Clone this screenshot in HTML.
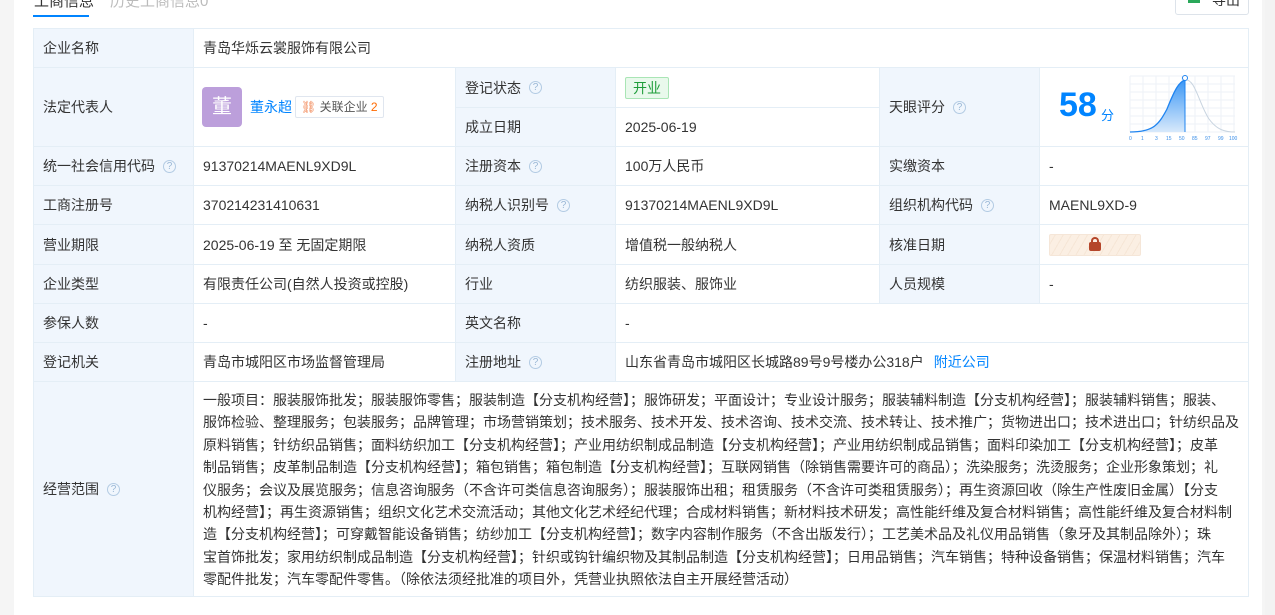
<!DOCTYPE html>
<html><head><meta charset="utf-8"><style>
*{margin:0;padding:0;box-sizing:border-box}
body{width:1275px;height:615px;overflow:hidden;background:#f5f5f5;font-family:"Liberation Sans","Noto Sans CJK SC",sans-serif;font-size:14px;color:#333;position:relative}
.panel{position:absolute;left:14px;top:0;width:1248px;height:615px;background:#fff}
.sb{position:absolute;left:1265px;top:0;width:10px;height:615px;background:#f3f3f3}
.c{position:absolute;border-right:1px solid #e4eef6;border-bottom:1px solid #e4eef6;padding-left:9px;display:flex;align-items:center;white-space:nowrap}
.l{background:#f0f6fd}
.q{display:inline-block;width:13px;height:13px;border:1px solid #b3cbe3;border-radius:50%;color:#9bb8d6;font-size:10px;line-height:11px;text-align:center;margin-left:8px}
a{color:#0084ff;text-decoration:none}
</style></head><body>
<div class="panel"></div>
<div class="sb"></div>
<div style="position:absolute;left:34px;top:-10px;font-size:15px;color:#333">工商信息</div>
<div style="position:absolute;left:110px;top:-10px;font-size:15px;color:#bbb">历史工商信息0</div>
<div style="position:absolute;left:33px;top:15px;width:56px;height:2px;background:#0084ff"></div>
<div style="position:absolute;left:1175px;top:-10px;width:74px;height:25px;border:1px solid #dde3ea;border-radius:3px;background:#fff;font-size:14px;padding-left:36px;line-height:18px">导出<span style="position:absolute;left:12px;top:2px;width:12px;height:10px;background:#2aa85a"></span></div>
<div style="position:absolute;left:33px;top:28px;width:1216px;height:569px;border-left:1px solid #e4eef6;border-top:1px solid #e4eef6"></div>
<!-- row1 -->
<div class="c l" style="left:34px;top:29px;width:160px;height:39px">企业名称</div>
<div class="c" style="left:194px;top:29px;width:1055px;height:39px">青岛华烁云裳服饰有限公司</div>
<!-- row2 -->
<div class="c l" style="left:34px;top:68px;width:160px;height:79px">法定代表人</div>
<div class="c" style="left:194px;top:68px;width:262px;height:79px;padding-left:8px">
<div style="width:40px;height:40px;border-radius:4px;background:#bc9fdb;color:#fff;font-size:20px;text-align:center;line-height:40px">董</div>
<a style="margin-left:8px">董永超</a>
<span style="margin-left:3px;border:1px solid #e0e6ef;border-radius:2px;padding:1px 5px;font-size:12px;color:#555;line-height:18px"><span style="color:#f07b45">⛓</span> 关联企业 <span style="color:#ff6a00">2</span></span></div>
<div class="c l" style="left:456px;top:68px;width:160px;height:40px">登记状态<span class="q">?</span></div>
<div class="c" style="left:616px;top:68px;width:264px;height:40px"><span style="border:1px solid #a9e5b5;background:#e9f9ec;color:#1f9d3a;padding:0 7px;border-radius:2px;line-height:20px">开业</span></div>
<div class="c l" style="left:456px;top:108px;width:160px;height:39px">成立日期</div>
<div class="c" style="left:616px;top:108px;width:264px;height:39px">2025-06-19</div>
<div class="c l" style="left:880px;top:68px;width:160px;height:79px">天眼评分<span class="q">?</span></div>
<div class="c" style="left:1040px;top:68px;width:209px;height:79px">
<span style="position:absolute;left:19px;top:18px;font-size:34px;font-weight:bold;color:#0084ff">58</span>
<span style="position:absolute;left:61px;top:37px;font-size:13px;color:#0084ff">分</span>
<svg style="position:absolute;left:89px;top:6px" width="110" height="68" viewBox="0 0 110 68">
<g stroke="#eef2f7" stroke-width="1"><path d="M1 2H106M1 10H106M1 18H106M1 26H106M1 34H106M1 42H106M1 50H106M1 58H106M1 2V58M14 2V58M27 2V58M40 2V58M53 2V58M66 2V58M79 2V58M92 2V58M105 2V58"/></g>
<defs><linearGradient id="g" x1="0" y1="0" x2="0" y2="1"><stop offset="0" stop-color="#3c97f5"/><stop offset="1" stop-color="#d8e9fb"/></linearGradient></defs>
<path d="M1 58C25 58 30 50 38 35C46 15 50 8 56 6L56 58Z" fill="url(#g)"/>
<path d="M56 6C66 4 70 30 80 45C88 56 96 58 106 58" stroke="#c8d4e0" fill="none"/>
<path d="M1 58C25 58 30 50 38 35C46 15 50 8 56 6" stroke="#1f84f0" fill="none" stroke-width="1.3"/>
<path d="M56 6V58" stroke="#1f84f0"/><circle cx="56" cy="4" r="2.5" fill="#fff" stroke="#1f84f0"/>
<g font-size="5" fill="#3a8ee8" font-family="Liberation Sans"><text x="0" y="66">0</text><text x="12" y="66">1</text><text x="26" y="66">3</text><text x="37" y="66">15</text><text x="50" y="66">50</text><text x="63" y="66">85</text><text x="76" y="66">97</text><text x="89" y="66">99</text><text x="100" y="66">100</text></g>
</svg></div>
<!-- rows -->
<div class="c l" style="left:34px;top:147px;width:160px;height:39px">统一社会信用代码<span class="q">?</span></div>
<div class="c" style="left:194px;top:147px;width:262px;height:39px">91370214MAENL9XD9L</div>
<div class="c l" style="left:456px;top:147px;width:160px;height:39px">注册资本<span class="q">?</span></div>
<div class="c" style="left:616px;top:147px;width:264px;height:39px">100万人民币</div>
<div class="c l" style="left:880px;top:147px;width:160px;height:39px">实缴资本</div>
<div class="c" style="left:1040px;top:147px;width:209px;height:39px">-</div>

<div class="c l" style="left:34px;top:186px;width:160px;height:39px">工商注册号</div>
<div class="c" style="left:194px;top:186px;width:262px;height:39px">370214231410631</div>
<div class="c l" style="left:456px;top:186px;width:160px;height:39px">纳税人识别号<span class="q">?</span></div>
<div class="c" style="left:616px;top:186px;width:264px;height:39px">91370214MAENL9XD9L</div>
<div class="c l" style="left:880px;top:186px;width:160px;height:39px">组织机构代码<span class="q">?</span></div>
<div class="c" style="left:1040px;top:186px;width:209px;height:39px">MAENL9XD-9</div>

<div class="c l" style="left:34px;top:225px;width:160px;height:40px">营业期限</div>
<div class="c" style="left:194px;top:225px;width:262px;height:40px">2025-06-19 至 无固定期限</div>
<div class="c l" style="left:456px;top:225px;width:160px;height:40px">纳税人资质</div>
<div class="c" style="left:616px;top:225px;width:264px;height:40px">增值税一般纳税人</div>
<div class="c l" style="left:880px;top:225px;width:160px;height:40px">核准日期</div>
<div class="c" style="left:1040px;top:225px;width:209px;height:40px"><span style="width:92px;height:22px;border:1px solid #f5e6d8;border-radius:2px;background:repeating-linear-gradient(-60deg,#fbefe3 0 6px,#f6e6d6 6px 7px);display:flex;justify-content:center;align-items:center"><span style="width:12px;height:9px;background:#b5462a;border-radius:2px;margin-top:4px;position:relative"><span style="position:absolute;left:2px;top:-5px;width:8px;height:7px;border:2px solid #b5462a;border-bottom:none;border-radius:4px 4px 0 0"></span></span></span></div>

<div class="c l" style="left:34px;top:265px;width:160px;height:39px">企业类型</div>
<div class="c" style="left:194px;top:265px;width:262px;height:39px">有限责任公司(自然人投资或控股)</div>
<div class="c l" style="left:456px;top:265px;width:160px;height:39px">行业</div>
<div class="c" style="left:616px;top:265px;width:264px;height:39px">纺织服装、服饰业</div>
<div class="c l" style="left:880px;top:265px;width:160px;height:39px">人员规模</div>
<div class="c" style="left:1040px;top:265px;width:209px;height:39px">-</div>

<div class="c l" style="left:34px;top:304px;width:160px;height:39px">参保人数</div>
<div class="c" style="left:194px;top:304px;width:262px;height:39px">-</div>
<div class="c l" style="left:456px;top:304px;width:160px;height:39px">英文名称</div>
<div class="c" style="left:616px;top:304px;width:633px;height:39px">-</div>

<div class="c l" style="left:34px;top:343px;width:160px;height:39px">登记机关</div>
<div class="c" style="left:194px;top:343px;width:262px;height:39px">青岛市城阳区市场监督管理局</div>
<div class="c l" style="left:456px;top:343px;width:160px;height:39px">注册地址<span class="q">?</span></div>
<div class="c" style="left:616px;top:343px;width:633px;height:39px">山东省青岛市城阳区长城路89号9号楼办公318户<a style="margin-left:10px">附近公司</a></div>

<div class="c l" style="left:34px;top:382px;width:160px;height:215px">经营范围<span class="q">?</span></div>
<div class="c" style="left:194px;top:382px;width:1055px;height:215px;align-items:flex-start;padding-top:7px;line-height:22.4px;font-size:14px"><div>
一般项目：服装服饰批发；服装服饰零售；服装制造【分支机构经营】；服饰研发；平面设计；专业设计服务；服装辅料制造【分支机构经营】；服装辅料销售；服装、<br>
服饰检验、整理服务；包装服务；品牌管理；市场营销策划；技术服务、技术开发、技术咨询、技术交流、技术转让、技术推广；货物进出口；技术进出口；针纺织品及<br>
原料销售；针纺织品销售；面料纺织加工【分支机构经营】；产业用纺织制成品制造【分支机构经营】；产业用纺织制成品销售；面料印染加工【分支机构经营】；皮革<br>
制品销售；皮革制品制造【分支机构经营】；箱包销售；箱包制造【分支机构经营】；互联网销售（除销售需要许可的商品）；洗染服务；洗烫服务；企业形象策划；礼<br>
仪服务；会议及展览服务；信息咨询服务（不含许可类信息咨询服务）；服装服饰出租；租赁服务（不含许可类租赁服务）；再生资源回收（除生产性废旧金属）【分支<br>
机构经营】；再生资源销售；组织文化艺术交流活动；其他文化艺术经纪代理；合成材料销售；新材料技术研发；高性能纤维及复合材料销售；高性能纤维及复合材料制<br>
造【分支机构经营】；可穿戴智能设备销售；纺纱加工【分支机构经营】；数字内容制作服务（不含出版发行）；工艺美术品及礼仪用品销售（象牙及其制品除外）；珠<br>
宝首饰批发；家用纺织制成品制造【分支机构经营】；针织或钩针编织物及其制品制造【分支机构经营】；日用品销售；汽车销售；特种设备销售；保温材料销售；汽车<br>
零配件批发；汽车零配件零售。（除依法须经批准的项目外，凭营业执照依法自主开展经营活动）</div></div>
</body></html>
